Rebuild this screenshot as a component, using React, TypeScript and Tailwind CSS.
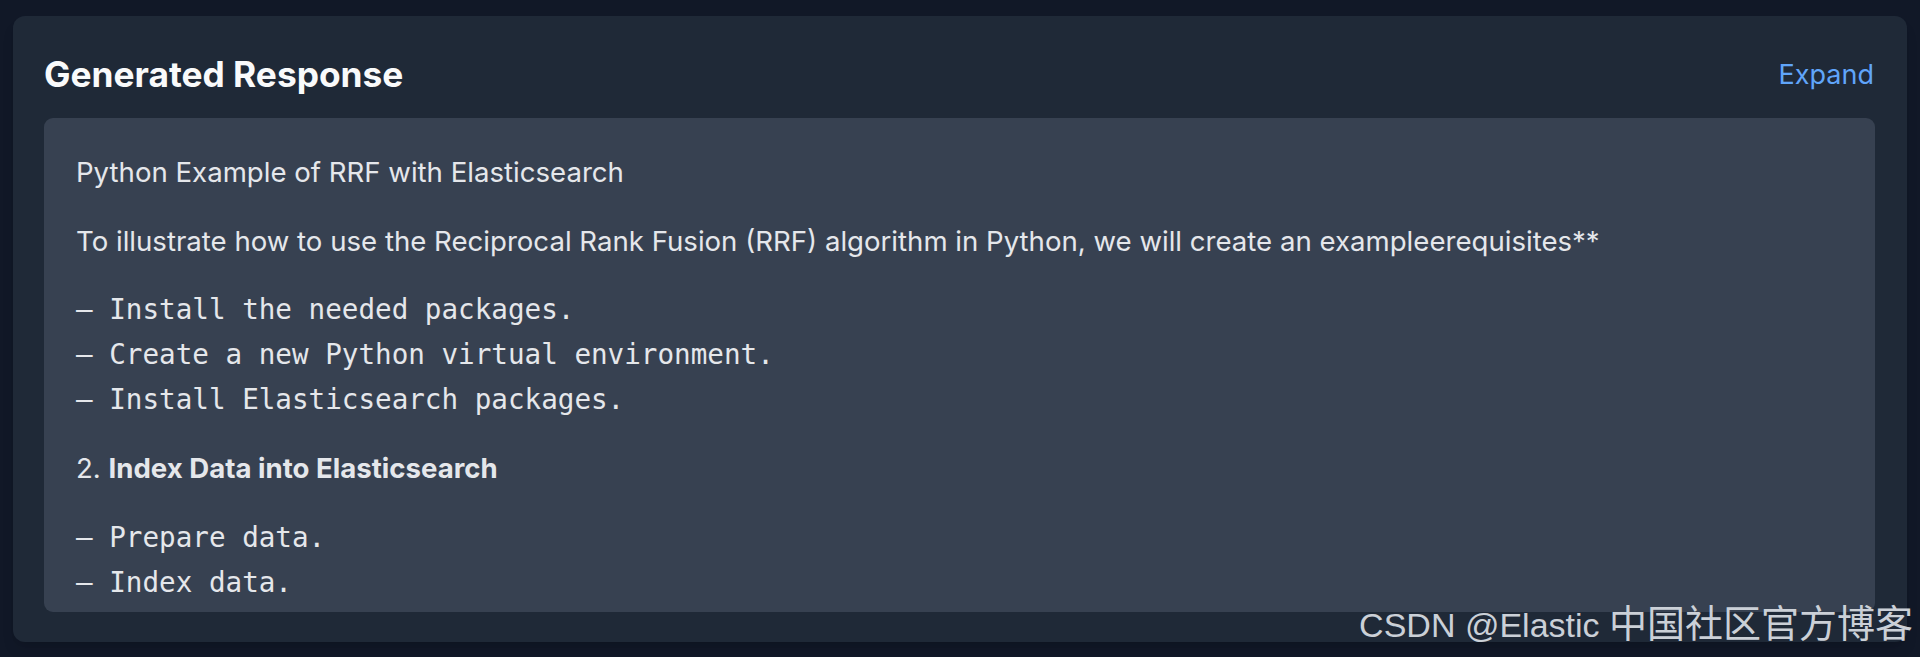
export default function App() {
  const mono = "font-['DejaVu_Sans_Mono',monospace] text-[27.6px] leading-[45px] whitespace-pre text-[#e5e7eb]";
  return (
    <div className="relative min-h-screen bg-[#111827] px-[13px] pt-4 pb-[15px] font-['Inter',sans-serif]">
      <div className="rounded-[12px] bg-[#1f2937] pl-[31px] pr-[32px] pt-[35px] pb-[30px] shadow-lg">
        <div className="mb-[19px] flex items-center justify-between">
          <h2 className="text-[35.3px] font-bold leading-[48px] text-[#f9fafb]">Generated Response</h2>
          <span className="mr-[1px] text-[27px] leading-[40px] text-[#60a5fa]">Expand</span>
        </div>
        <div className="h-[494px] overflow-hidden rounded-[9px] bg-[#374151] pl-[32px] pr-[32px] pt-[34px]">
          <div className="flex flex-col text-[27.6px] leading-[40px] text-[#e5e7eb]">
            <p>Python Example of RRF with Elasticsearch</p>
            <p className="mt-[29px]">
              To illustrate how to use the Reciprocal Rank Fusion (RRF) algorithm in Python, we will create an
              exampleerequisites**
            </p>
            <div className={`${mono} mt-[26px]`}>
              <div>– Install the needed packages.</div>
              <div>– Create a new Python virtual environment.</div>
              <div>– Install Elasticsearch packages.</div>
            </div>
            <p className="mt-[26px]">
              2. <strong className="font-bold">Index Data into Elasticsearch</strong>
            </p>
            <div className={`${mono} mt-[27px]`}>
              <div>– Prepare data.</div>
              <div>– Index data.</div>
            </div>
          </div>
        </div>
      </div>
      <div className="pointer-events-none absolute bottom-[15px] right-[7px] flex items-baseline whitespace-nowrap leading-none text-[#cbd0d7]">
        <span className="font-['Liberation_Sans',sans-serif] text-[34px]">CSDN @Elastic&nbsp;</span>
        <span className="font-['Noto_Sans_CJK_SC',sans-serif] text-[38px]">中国社区官方博客</span>
      </div>
    </div>
  );
}
